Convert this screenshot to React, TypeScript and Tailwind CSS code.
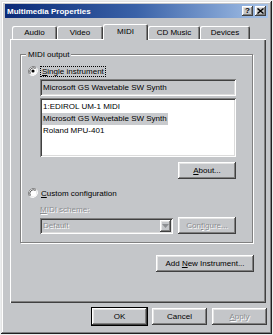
import React from "react";

const raised =
  "shadow-[inset_-1px_-1px_#404040,inset_1px_1px_#ffffff,inset_-2px_-2px_#808080,inset_2px_2px_#e4e4e4]";
const sunken =
  "shadow-[inset_1px_1px_#808080,inset_-1px_-1px_#ffffff,inset_2px_2px_#404040,inset_-2px_-2px_#dcdcdc]";
const disabledText = "text-[#8c8e91] [text-shadow:1px_1px_0_#ffffff]";

const Radio = ({ checked }: { checked?: boolean }) => (
  <svg width="10" height="10" viewBox="0 0 12 12" className="shrink-0">
    <path d="M10.2 1.8 A6 6 0 0 0 1.8 10.2" fill="none" stroke="#808080" strokeWidth="1.2" />
    <path d="M1.8 10.2 A6 6 0 0 0 10.2 1.8" fill="none" stroke="#ffffff" strokeWidth="1.2" />
    <circle cx="6" cy="6" r="4.4" fill="#ffffff" />
    <path d="M9 3 A4.3 4.3 0 0 0 3 9" fill="none" stroke="#404040" strokeWidth="1" />
    {checked && <circle cx="6" cy="6" r="1.9" fill="#000000" />}
  </svg>
);

const Button = ({
  children,
  className = "",
  disabled,
  isDefault,
}: {
  children: React.ReactNode;
  className?: string;
  disabled?: boolean;
  isDefault?: boolean;
}) => (
  <div
    className={`flex h-[17px] items-center justify-center bg-[#c4c6c9] ${raised} ${
      isDefault ? "outline outline-1 outline-black" : ""
    } ${disabled ? disabledText : "text-black"} ${className}`}
  >
    {children}
  </div>
);

export default function App() {
  const tabs = [
    { name: "Audio", w: "w-[45px]" },
    { name: "Video", w: "w-[46px]" },
    { name: "MIDI", w: "w-[45px]", active: true },
    { name: "CD Music", w: "w-[52px]" },
    { name: "Devices", w: "w-[50px]" },
  ];

  return (
    <div
      className="h-[335px] w-[273px] bg-[#eceeef] pl-[1px] pt-[1px] text-[8px] leading-[11px] text-black"
      style={{ fontFamily: '"Liberation Sans", Arial, sans-serif' }}
    >
      <div className="flex h-[333px] w-[271px] flex-col bg-[#c4c6c9] px-[4px] pt-[3px] shadow-[inset_-1px_-1px_#202020,inset_1px_1px_#e4e4e4,inset_-2px_-2px_#7c7e80,inset_2px_2px_#ffffff]">
        {/* Title bar */}
        <div className="flex h-[14px] items-center bg-gradient-to-r from-[#0c2b78] via-[#3a62a8] to-[#a7c3e8] pl-[2px] pr-[2px]">
          <span className="text-[8px] font-bold text-white">Multimedia Properties</span>
          <div className="ml-auto flex gap-[2px]">
            <div className={`flex h-[10px] w-[11px] items-center justify-center bg-[#c4c6c9] text-[8px] font-bold leading-none ${raised}`}>
              ?
            </div>
            <div className={`flex h-[10px] w-[11px] items-center justify-center bg-[#c4c6c9] ${raised}`}>
              <svg width="7" height="6" viewBox="0 0 7 6">
                <path d="M0.5 0.5 L6.5 5.5 M6.5 0.5 L0.5 5.5" stroke="#000" strokeWidth="1.4" />
              </svg>
            </div>
          </div>
        </div>

        {/* Tabs */}
        <div className="mt-[6px] flex h-[15px] items-end pl-[7px]">
          {tabs.map((t) =>
            t.active ? (
              <div
                key={t.name}
                className={`relative z-10 -mb-[1px] flex h-[16px] ${t.w} items-start justify-center rounded-t-[2px] bg-[#c4c6c9] pt-[2px] shadow-[inset_1px_1px_#ffffff,inset_-1px_0_#404040,inset_-2px_0_#808080]`}
              >
                {t.name}
              </div>
            ) : (
              <div
                key={t.name}
                className={`flex h-[13px] ${t.w} items-center justify-center rounded-t-[2px] bg-[#c4c6c9] shadow-[inset_1px_1px_#ffffff,inset_-1px_0_#404040,inset_-2px_0_#808080]`}
              >
                {t.name}
              </div>
            )
          )}
        </div>

        {/* Panel */}
        <div className="ml-[5px] mr-[2px] flex h-[264px] flex-col bg-[#c4c6c9] shadow-[inset_1px_1px_#ffffff,inset_-1px_-1px_#404040,inset_-2px_-2px_#808080]">
          <div className="relative mx-[10px] mt-[15px] h-[189px] w-[233px] border border-[#808080] shadow-[inset_1px_1px_#ffffff,1px_1px_#ffffff]">
            <span className="absolute -top-[6px] left-[5px] bg-[#c4c6c9] px-[2px]">MIDI output</span>
            <div className="flex flex-col pl-[7px] pt-[10px]">
              <div className="flex h-[12px] items-center gap-[2px]">
                <Radio checked />
                <span className="border border-dotted border-black px-[1px] leading-[9px]">
                  <span className="underline">S</span>ingle instrument
                </span>
              </div>
              <div className={`ml-[12px] mt-[2px] flex h-[17px] w-[196px] items-center bg-[#c4c6c9] pl-[3px] ${sunken}`}>
                Microsoft GS Wavetable SW Synth
              </div>
              <div className={`ml-[12px] mt-[2px] flex h-[59px] w-[196px] flex-col items-start bg-white pl-[2px] pt-[3px] ${sunken}`}>
                <span className="px-[1px] leading-[12px]">1:EDIROL UM-1 MIDI</span>
                <span className="bg-[#c8cacd] px-[1px] leading-[12px]">Microsoft GS Wavetable SW Synth</span>
                <span className="px-[1px] leading-[12px]">Roland MPU-401</span>
              </div>
              <Button className="ml-[150px] mt-[5px] w-[58px]">
                <span>
                  <span className="underline">A</span>bout...
                </span>
              </Button>
              <div className="mt-[8px] flex h-[12px] items-center gap-[3px]">
                <Radio />
                <span>
                  <span className="underline">C</span>ustom configuration
                </span>
              </div>
              <div className={`ml-[12px] mt-[5px] h-[11px] ${disabledText}`}>
                <span className="underline">M</span>IDI scheme:
              </div>
              <div className="ml-[12px] mt-[2px] flex items-center gap-[5px]">
                <div className={`flex h-[16px] w-[133px] items-center bg-[#c4c6c9] pl-[3px] pr-[2px] ${sunken}`}>
                  <span className={disabledText}>Default</span>
                  <div className={`ml-auto flex h-[12px] w-[11px] items-center justify-center bg-[#c4c6c9] ${raised}`}>
                    <svg width="7" height="4" viewBox="0 0 7 4">
                      <path d="M0 0 H7 L3.5 4 Z" fill="#8c8e91" />
                    </svg>
                  </div>
                </div>
                <Button className="w-[58px]" disabled>
                  <span>
                    Con<span className="underline">f</span>igure...
                  </span>
                </Button>
              </div>
            </div>
          </div>
          <div className="mr-[12px] mt-[12px] flex justify-end">
            <Button className="w-[98px]">
              <span>
                Add <span className="underline">N</span>ew Instrument...
              </span>
            </Button>
          </div>
        </div>

        {/* Dialog buttons */}
        <div className="mt-[5px] flex justify-end gap-[5px] pr-[1px]">
          <Button className="w-[55px]" isDefault>
            OK
          </Button>
          <Button className="w-[55px]">Cancel</Button>
          <Button className="w-[55px]" disabled>
            <span>
              <span className="underline">A</span>pply
            </span>
          </Button>
        </div>
      </div>
    </div>
  );
}
